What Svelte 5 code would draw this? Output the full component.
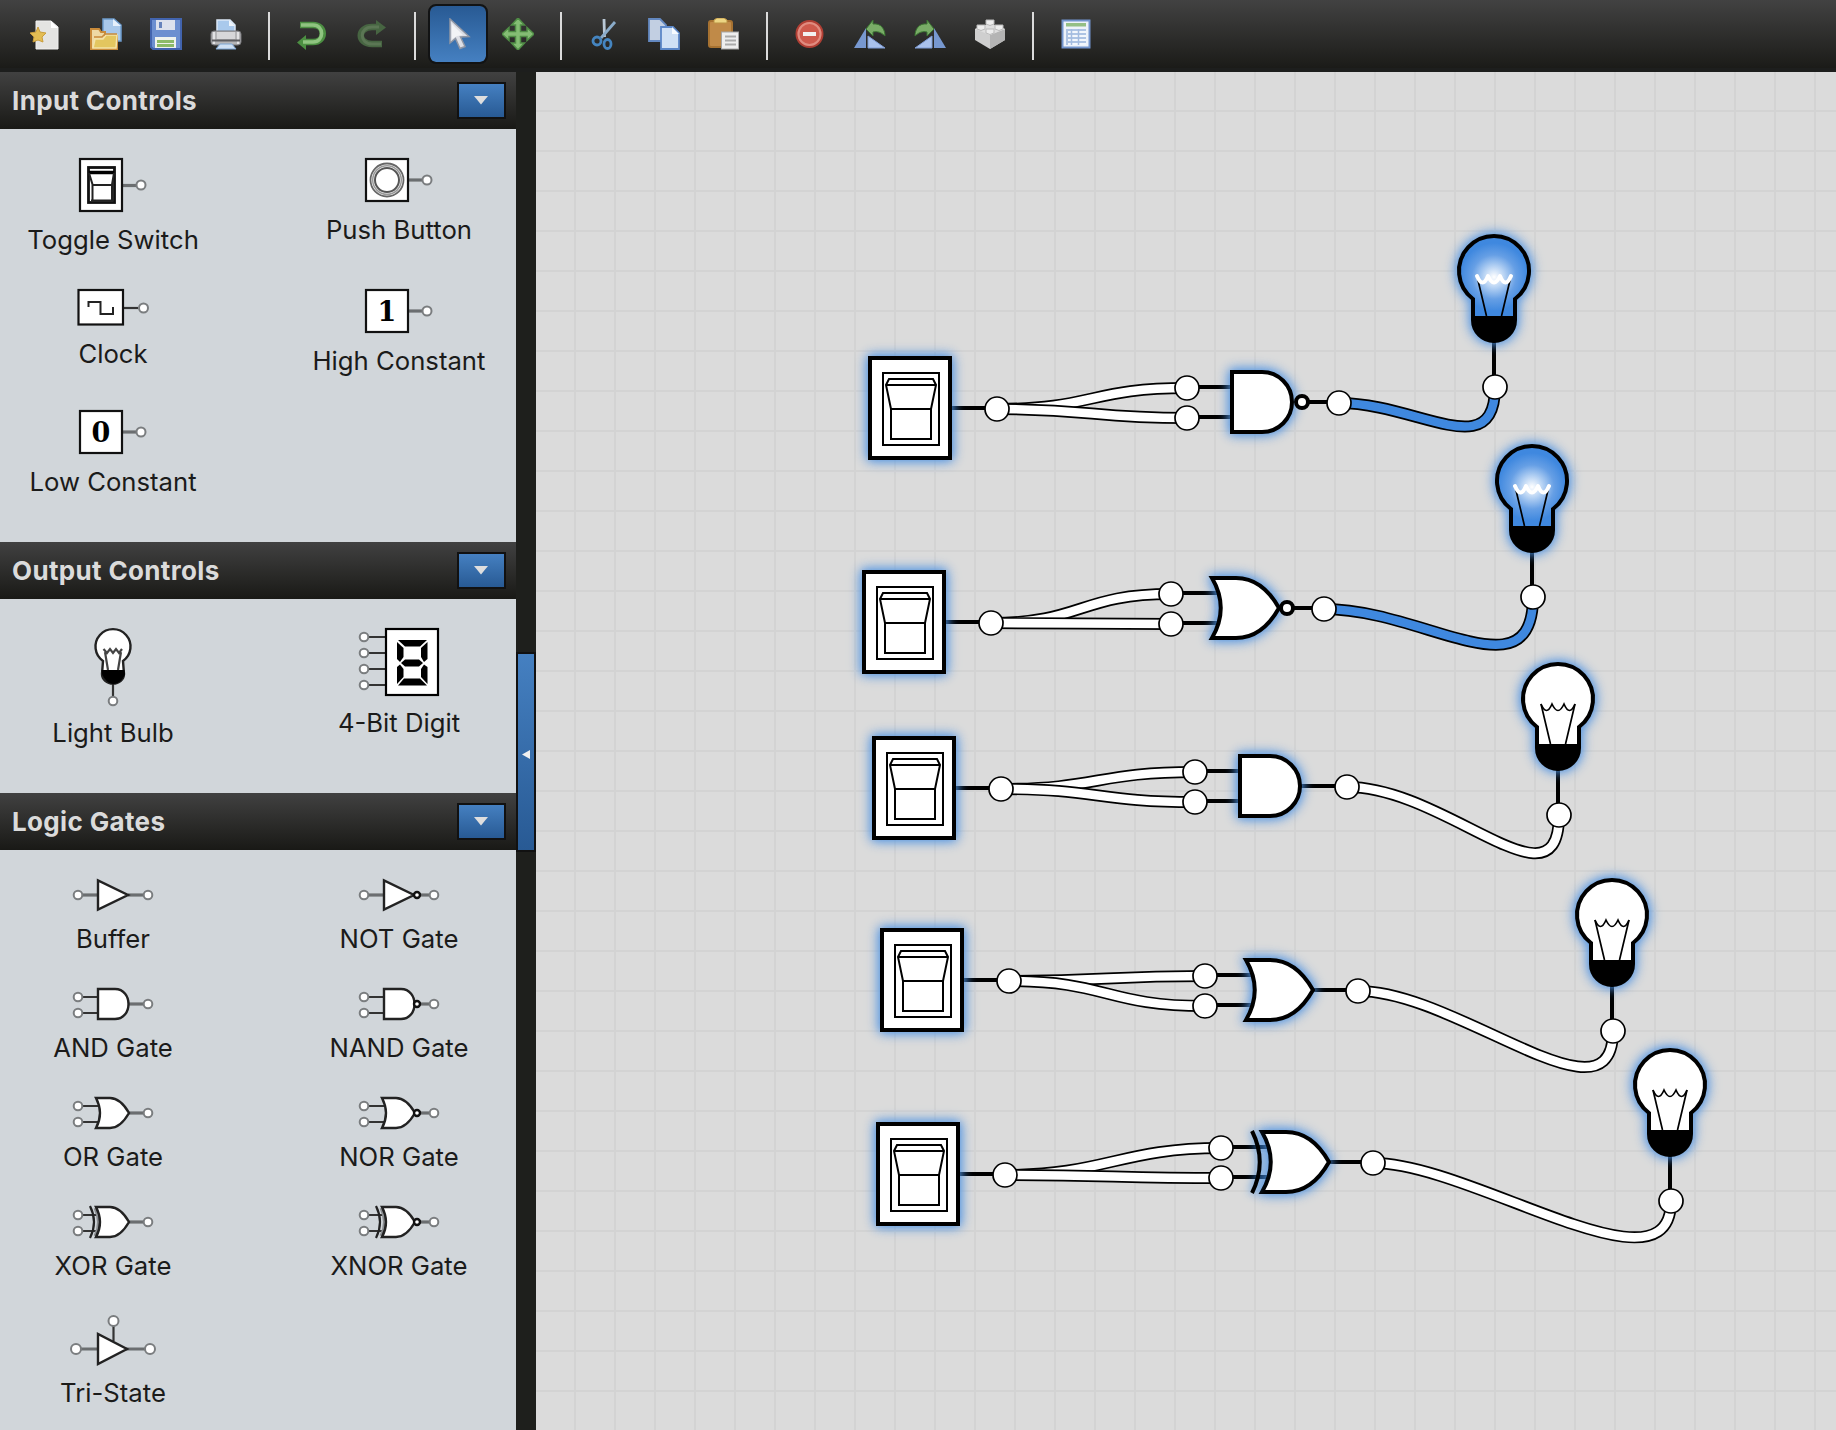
<script>
  const tools = [
    ['new', 'open', 'save', 'print'],
    ['undo', 'redo'],
    ['select', 'move'],
    ['cut', 'copy', 'paste'],
    ['delete', 'rotateLeft', 'rotateRight', 'brick'],
    ['table'],
  ];

  const sections = [
    {
      title: 'Input Controls', key: 'input',
      items: [
        { name: 'Toggle Switch', icon: 'toggle', w: 68, h: 54 },
        { name: 'Push Button', icon: 'push', w: 68, h: 44 },
        { name: 'Clock', icon: 'clock', w: 71, h: 37 },
        { name: 'High Constant', icon: 'const', digit: '1', w: 68, h: 44 },
        { name: 'Low Constant', icon: 'const', digit: '0', w: 68, h: 44 },
      ],
    },
    {
      title: 'Output Controls', key: 'output',
      items: [
        { name: 'Light Bulb', icon: 'bulb', w: 38, h: 78 },
        { name: '4-Bit Digit', icon: 'digit', w: 80, h: 68 },
      ],
    },
    {
      title: 'Logic Gates', key: 'gates',
      items: [
        { name: 'Buffer', icon: 'gate', shape: 'buf', w: 80, h: 32 },
        { name: 'NOT Gate', icon: 'gate', shape: 'buf', inv: true, w: 80, h: 32 },
        { name: 'AND Gate', icon: 'gate', shape: 'and', w: 80, h: 32 },
        { name: 'NAND Gate', icon: 'gate', shape: 'and', inv: true, w: 80, h: 32 },
        { name: 'OR Gate', icon: 'gate', shape: 'or', w: 80, h: 32 },
        { name: 'NOR Gate', icon: 'gate', shape: 'or', inv: true, w: 80, h: 32 },
        { name: 'XOR Gate', icon: 'gate', shape: 'xor', w: 80, h: 32 },
        { name: 'XNOR Gate', icon: 'gate', shape: 'xor', inv: true, w: 80, h: 32 },
        { name: 'Tri-State', icon: 'tri', w: 86, h: 50 },
      ],
    },
  ];

  const iconBody = {
    buf: 'M25 1.5V30.5L55 16Z',
    and: 'M25 1H42C60 1 60 31 42 31H25Z',
    or: 'M23 1H37C46 1 52 9 56 16C52 23 46 31 37 31H23Q31 16 23 1Z',
    xor: 'M23 1H37C46 1 52 9 56 16C52 23 46 31 37 31H23Q31 16 23 1Z',
  };

  const gateBody = {
    and: 'M0 0H30A30 30 0 0 1 30 60H0Z',
    or: 'M-4 0H20C40 0 54 14 63 30C54 46 40 60 20 60H-4Q13.5 30 -4 0Z',
  };

  // Each row is switch -> gate -> bulb; coordinates are the part origins on the canvas.
  const rows = [
    { s: [870, 358], g: [1232, 372], b: [1494, 271], shape: 'and', inv: true, bubble: 70, out: 107 },
    { s: [864, 572], g: [1216, 578], b: [1532, 481], shape: 'or', inv: true, bubble: 71, out: 108 },
    { s: [874, 738], g: [1240, 756], b: [1558, 699], shape: 'and', inv: false, out: 107 },
    { s: [882, 930], g: [1250, 960], b: [1612, 915], shape: 'or', inv: false, out: 108 },
    { s: [878, 1124], g: [1266, 1132], b: [1670, 1085], shape: 'or', xor: true, inv: false, out: 107 },
  ];

  function wire(x1, y1, x2, y2, down) {
    const k = Math.min(100, Math.hypot(x2 - x1, y2 - y1) / 2);
    const c2 = down ? `${x2} ${y2 + k}` : `${x2 - k} ${y2}`;
    return `M${x1} ${y1}C${x1 + k} ${y1} ${c2} ${x2} ${y2}`;
  }

  const wires = rows.flatMap(({ s, g, b, out, inv }) => [
    { d: wire(s[0] + 127, s[1] + 51, g[0] - 45, g[1] + 16, false), on: false },
    { d: wire(s[0] + 127, s[1] + 51, g[0] - 45, g[1] + 46, false), on: false },
    { d: wire(g[0] + out, g[1] + 31, b[0] + 1, b[1] + 116, true), on: inv },
  ]);

  const ports = rows.flatMap(({ s, g, b, out }) => [
    [s[0] + 127, s[1] + 51],
    [g[0] - 45, g[1] + 16],
    [g[0] - 45, g[1] + 46],
    [g[0] + out, g[1] + 31],
    [b[0] + 1, b[1] + 116],
  ]);

  const segments = [
    'M39 12H68L61 18.500H46Z', 'M38 14L44.500 20V29L41 34L38 31Z', 'M68.500 14L62 20V29L65 34L68.500 31Z',
    'M42 35L46 31.500H60L64 35L60 38.500H46Z',
    'M38 39L41 36.500L44.500 41V49L38 56Z', 'M68.500 39L65 36.500L62 41V49L68.500 56Z', 'M45 50.500H61L68 57.500H39Z',
  ];
</script>

{#snippet toolIcon(name)}
  <svg class="tool-icon" viewBox="0 0 32 32" aria-hidden="true">
    {#if name === 'new'}
      <path d="M6 3H21L28 9V31H6Z" fill="#e4e4e2" stroke="#f0f0f0" />
      <path d="M21 3L28 10H21Z" fill="#fff" />
      <path d="M8 9L10 14L16 15L12 19L13 24L8 22L3 24L4 19L0 15L6 14Z" fill="#e3bd53" stroke="#c99d3c" />
    {:else if name === 'open'}
      <path d="M13 1H24L31 7V23H13Z" fill="#a9c8ea" stroke="#6e9ccd" stroke-width="1.5" />
      <path d="M23 1V8H31Z" fill="#e6f0fb" />
      <path d="M1 31V11H9L11 14H15V18H27V31Z" fill="#eed9a4" stroke="#c98b3a" stroke-width="2" />
      <path d="M3 30L5 21H13L16 17H27L26 30Z" fill="#e3c65f" stroke="#f3e3a8" stroke-width="1.5" />
      <path d="M4 19H12L15 16H27" fill="none" stroke="#c98b3a" stroke-width="1.5" />
    {:else if name === 'save'}
      <path d="M1 1H31V31H3L1 29Z" fill="#6c8fd0" stroke="#4264ae" stroke-width="2" />
      <rect x="6" y="2" width="19" height="10" fill="#dce1ed" />
      <rect x="9" y="4" width="3" height="6" fill="#6683bc" />
      <rect x="5" y="19" width="21" height="11" fill="#eef2ee" />
      <path d="M7 23.5H24M7 27.5H24" stroke="#8cba68" stroke-width="3" />
    {:else if name === 'print'}
      <path d="M7 15V2H20L25 7V15Z" fill="#a9c9ec" stroke="#dbe8f6" stroke-width="1.5" />
      <path d="M19 2V8H25Z" fill="#eef5fc" />
      <rect x="1" y="13" width="30" height="14" rx="3" fill="#b5b5b7" stroke="#77777b" />
      <rect x="7" y="14" width="18" height="7" fill="#d7d7d9" />
      <path d="M4 14V26M28 14V26" stroke="#e2e2e4" stroke-width="2" />
      <path d="M2 22.500H30" stroke="#5d5d60" stroke-width="2" />
      <path d="M6 31L10 26H22L26 31Z" fill="#cfe0f3" stroke="#7fa6d3" />
    {:else if name === 'undo'}
      <path d="M4 7H17C30 7 30 24 17 24H10" fill="none" stroke="#4c8f42" stroke-width="6.5" />
      <path d="M10 17V32L1 24.5Z" fill="#4c8f42" />
      <path d="M5 7H17C28.500 7 28.500 24 17 24H7" fill="none" stroke="#8fc480" stroke-width="3.500" />
    {:else if name === 'redo'}
      <path d="M26 26H16C1 26 1 9 16 9H20" fill="none" stroke="#476542" stroke-width="6.500" />
      <path d="M20 2V17L30 9.500Z" fill="#476542" />
      <path d="M25 26H16C3 26 3 9 16 9H23" fill="none" stroke="#5b7654" stroke-width="3" />
    {:else if name === 'select'}
      <path d="M8 1V25L13.500 20.500L18 30.500L23 28.500L18.500 19L27 18.500Z" fill="#dddfe6" stroke="#8f96a4" stroke-width="1.500" />
      <path d="M10 6L21 17L15 18L10 21Z" fill="#f2f3f6" />
    {:else if name === 'move'}
      <path d="M16 0L22.500 7H18.500V13.500H25V9.500L32 16L25 22.500V18.500H18.500V25H22.500L16 32L9.500 25H13.500V18.500H7V22.500L0 16L7 9.500V13.500H13.500V7H9.500Z" fill="#84bd74" stroke="#4f8c45" stroke-width="1.500" />
    {:else if name === 'cut'}
      <path d="M16 1L16.500 19" stroke="#b9c8d6" stroke-width="2.800" />
      <path d="M27 4L13 20" stroke="#8aabc9" stroke-width="2.800" />
      <circle cx="9" cy="23" r="4" fill="none" stroke="#4585c0" stroke-width="2.800" />
      <ellipse cx="19.500" cy="26" rx="3.500" ry="4.500" fill="none" stroke="#4585c0" stroke-width="2.800" />
    {:else if name === 'copy'}
      <path d="M1 1H12L18 7V23H1Z" fill="#c2cfe2" stroke="#6388c0" stroke-width="1.800" />
      <path d="M13 9H25L31 15V31H13Z" fill="#cfe0f5" stroke="#5b87c8" stroke-width="1.800" />
      <path d="M24 9V16H31Z" fill="#f7fbff" />
    {:else if name === 'paste'}
      <rect x="1" y="3" width="23" height="26" rx="2" fill="#c08a48" stroke="#a77231" stroke-width="2" />
      <path d="M6 5V2L9 0H16L19 2V5Z" fill="#ecd583" stroke="#bb9344" />
      <rect x="13.500" y="14" width="17" height="17" fill="#eeeeee" stroke="#a5a5a5" />
      <path d="M17 18.500H28M17 22.500H28M17 26.500H28" stroke="#aaa" stroke-width="1.800" />
    {:else if name === 'delete'}
      <circle cx="15.500" cy="16" r="13" fill="#cf5a4d" stroke="#b03f34" stroke-width="2" />
      <circle cx="15.500" cy="16" r="11" fill="none" stroke="#e08c80" stroke-width="2" />
      <rect x="9" y="14" width="13" height="4" fill="#f3f1f1" />
    {:else if name === 'rotateLeft' || name === 'rotateRight'}
      <g class:flipped={name === 'rotateRight'}>
        <path d="M12 10V30H0Z" fill="#7798d0" />
        <path d="M14 18V30H31Z" fill="#a9c1eb" stroke="#7d9bd4" />
        <path d="M12 11L19 2V6C27 5 31 11 31 18C27 14 23 13 19 14V18Z" fill="#79ad67" stroke="#3b7532" />
      </g>
    {:else if name === 'brick'}
      <path d="M1 11L16 5L31 11V22L16 31L1 22Z" fill="#cfcfcf" />
      <path d="M16 17L31 11V22L16 31Z" fill="#b4b4b4" />
      <path d="M1 11L16 17L31 11L16 5Z" fill="#dedede" />
      <g fill="#ededed" stroke="#b9b9b9">
        <path d="M12 2H20V6Q16 9 12 6Z" /><path d="M3 7H11V11Q7 14 3 11Z" />
        <path d="M21 7H29V11Q25 14 21 11Z" /><path d="M12 11H20V15Q16 18 12 15Z" />
      </g>
    {:else if name === 'table'}
      <rect x="2.500" y="2.500" width="27" height="27" fill="#edf2fa" stroke="#7294cd" stroke-width="2" />
      <rect x="6" y="5" width="20" height="3.500" fill="#94bf85" />
      <rect x="6" y="11" width="20" height="16" fill="#adc3e3" />
      <path d="M8 14H26M8 18H26M8 22H26M8 26H26" stroke="#f2f6fc" stroke-width="2.200" />
      <path d="M11.500 11V27M18.500 11V27" stroke="#a3bbe0" stroke-width="1.500" />
    {/if}
  </svg>
{/snippet}

{#snippet partIcon(item)}
  <svg class="part-icon" width={item.w} height={item.h} viewBox="0 0 {item.w} {item.h}" aria-hidden="true">
    {#if item.icon === 'toggle'}
      <path class="lead" d="M44 27.500H58" />
      <rect class="frame" x="1" y="1" width="42" height="52" />
      <rect x="9.500" y="9.500" width="26" height="35" fill="#fff" stroke="#111" stroke-width="2.800" />
      <path d="M10 14.500H35" stroke="#000" stroke-width="3.500" />
      <path d="M10 15L13.500 26.500V43M35 15L33 26.500V43M13 27H34M12 42.500H35" stroke="#222" stroke-width="2" fill="none" />
      <circle class="pin" cx="62" cy="27" r="4.500" />
    {:else if item.icon === 'push'}
      <path class="lead" d="M44 22H58" />
      <rect class="frame" x="1" y="1" width="42" height="42" />
      <circle cx="22" cy="22" r="16.500" fill="#fff" stroke="#666" stroke-width="1.800" />
      <circle cx="22" cy="22" r="12" fill="#fff" stroke="#555" stroke-width="2" />
      <circle cx="22" cy="22" r="14.300" fill="none" stroke="#999" stroke-width="1.500" />
      <circle class="pin" cx="62" cy="22" r="4.500" />
    {:else if item.icon === 'clock'}
      <path class="lead dark" d="M45 19H60" />
      <rect class="frame" x="0.500" y="1" width="44.500" height="34.500" />
      <path d="M10.500 18V13H22.500V25H35V18" fill="none" stroke="#222" stroke-width="2" />
      <circle class="pin" cx="65.500" cy="19" r="4.500" />
    {:else if item.icon === 'const'}
      <path class="lead" d="M44 22H58" />
      <rect class="frame" x="1" y="1" width="42" height="42" />
      <text class="digit" x="22" y="31.500">{item.digit}</text>
      <circle class="pin" cx="62" cy="22" r="4.500" />
    {:else if item.icon === 'bulb'}
      <path class="lead dark" d="M19 54V68" />
      <path class="body" d="M9 33A17.500 17.500 0 1 1 29 33L30 46A11 9.500 0 0 1 8 46Z" />
      <path d="M7.500 42H30.500L31 46C29 52 24 56 19.500 56S10 52 8 46Z" fill="#000" />
      <path d="M9.500 21L13 25L16 21L19 25L22 21L25 25L28 21M11 24L14 42M27 24L24 42" fill="none" stroke="#444" stroke-width="2.200" />
      <circle class="pin" cx="19" cy="73" r="4.300" />
    {:else if item.icon === 'digit'}
      <path class="lead dark" d="M9 9H27M9 25H27M9 41H27M9 57H27" />
      <rect x="27" y="1" width="52" height="66" fill="#fff" stroke="#000" stroke-width="2.200" />
      {#each segments as d}<path {d} fill="#000" />{/each}
      {#each [9, 25, 41, 57] as y}<circle class="pin" cx="5" cy={y} r="4.300" />{/each}
    {:else if item.icon === 'tri'}
      <path class="lead" d="M10 34H28M56 34H76" />
      <path class="lead dark" d="M43.500 11V26" />
      <path class="body" d="M28 19V49L57 34Z" />
      <circle class="pin" cx="6" cy="34" r="5" /><circle class="pin" cx="80" cy="34" r="5" />
      <circle class="pin" cx="43.500" cy="6" r="5" />
    {:else}
      <path class="lead" d="M55 16H71" />
      {#if item.shape === 'buf'}
        <path class="lead" d="M9 16H25" />
      {:else}
        <path class="lead dark" d="M9 9H26M9 25H26" />
      {/if}
      {#if item.shape === 'xor'}
        <path d="M17 0Q25 16 17 32" fill="none" stroke="#222" stroke-width="2.200" />
        <path d="M22 2Q29 16 22 30" fill="none" stroke="#8a8d90" stroke-width="3" />
      {/if}
      <path class="body" d={iconBody[item.shape]} />
      {#if item.inv}<circle cx="58" cy="16" r="3" fill="#fff" stroke="#111" stroke-width="2.400" />{/if}
      {#if item.shape === 'buf'}
        <circle class="pin" cx="5" cy="16" r="4.300" />
      {:else}
        <circle class="pin" cx="5" cy="9" r="4.300" /><circle class="pin" cx="5" cy="25" r="4.300" />
      {/if}
      <circle class="pin" cx="75" cy="16" r="4.300" />
    {/if}
  </svg>
{/snippet}

<div class="app">
  <header class="toolbar">
    {#each tools as group, i}
      {#if i > 0}<span class="sep"></span>{/if}
      {#each group as name}
        <button class="tool" class:active={name === 'select'} aria-label={name}>{@render toolIcon(name)}</button>
      {/each}
    {/each}
  </header>

  <div class="main">
    <aside class="sidebar">
      {#each sections as section}
        <section class={section.key}>
          <h2>
            <span>{section.title}</span>
            <button class="drop" aria-label="Collapse"><svg width="14" height="9" viewBox="0 0 14 9"><path d="M0 0H14L7 8.500Z" fill="#dedede" /></svg></button>
          </h2>
          <div class="parts">
            {#each section.items as item}
              <div class="part">
                {@render partIcon(item)}
                <span class="label">{item.name}</span>
              </div>
            {/each}
          </div>
        </section>
      {/each}
    </aside>

    <div class="splitter">
      <button class="handle" aria-label="Hide sidebar"><svg width="8" height="9" viewBox="0 0 8 9"><path d="M8 0V9L0 4.500Z" fill="#f0f0f0" /></svg></button>
    </div>

    <main class="canvas">
      <svg width="1300" height="1358" viewBox="536 72 1300 1358">
        <defs>
          <radialGradient id="glow" gradientUnits="userSpaceOnUse" cx="0" cy="6" r="34">
            <stop offset="0" stop-color="#fff" />
            <stop offset="0.300" stop-color="#b9d4f4" />
            <stop offset="0.650" stop-color="#669fe5" />
            <stop offset="1" stop-color="#3f88df" />
          </radialGradient>
        </defs>

        {#each rows as row}
          <g transform="translate({row.s[0]} {row.s[1]})">
            <path class="stub" d="M80 50H120" />
            <rect class="solid" width="80" height="100" />
            <path class="fine" d="M13 15H69V87H13Z" />
            <path class="fine" d="M16 27L19 21H63L66 27L61 51H21ZM16 27H66M21 51V81H61V51" />
          </g>
          <g transform="translate({row.g[0]} {row.g[1]})">
            <path class="stub" d="M-40 15H3M-40 45H3M{row.inv ? 74 : 60} 30H100" />
            <path class="solid" d={gateBody[row.shape]} />
            {#if row.xor}<path class="arc" d="M-14 -1Q1.500 30 -14 61" />{/if}
            {#if row.inv}<circle class="bubble" cx={row.bubble} cy="30" r="6" />{/if}
          </g>
          <g transform="translate({row.b[0]} {row.b[1]})">
            <path class="stub" d="M0 70V110" />
            <path class="solid" class:lit={row.inv} d="M-21 28A35 35 0 1 1 21 28V49A21 21 0 0 1 -21 49Z" />
            <path d="M-21 45H21V49A21 21 0 0 1 -21 49Z" />
            <path class="leg" d="M-17 5L-7.500 45M17 5L7.500 45" />
            <path class="filament" class:hot={row.inv} d="M-17 5Q-11.500 18 -6 5Q0 18 6 5Q11.500 18 17 5" />
          </g>
        {/each}

        {#each wires as w}
          <path class="wire-edge" d={w.d} />
          <path class="wire" class:on={w.on} d={w.d} />
        {/each}
        {#each ports as [x, y]}
          <circle class="port" cx={x} cy={y} r="12" />
        {/each}
      </svg>
    </main>
  </div>
</div>

<style>
  :global(body) { margin: 0; background: #1e1f1c; }
  .app { width: 1836px; height: 1430px; overflow: hidden; display: flex; flex-direction: column; font-family: Inter, "Liberation Sans", sans-serif; color: #1b1b1a; }
  button { padding: 0; margin: 0; box-sizing: border-box; display: flex; align-items: center; justify-content: center; }

  .toolbar { box-sizing: border-box; height: 72px; flex: none; display: flex; align-items: flex-start; padding: 4px 16px 0; border-bottom: 4px solid #1d1e1d; background: linear-gradient(#424242, #1b1b18) padding-box; }
  .tool { width: 60px; height: 60px; border: 2px solid transparent; border-radius: 8px; background: none; }
  .tool.active { border-color: #121314; background: linear-gradient(#285a94, #4580c1) padding-box; }
  .tool-icon { width: 32px; height: 32px; display: block; }
  .flipped { transform: translateX(32px) scaleX(-1); }
  .sep { width: 2px; height: 48px; margin: 8px 12px 0; background: #dbdbdb; }

  .main { flex: 1; min-height: 0; display: flex; }
  .sidebar { width: 516px; flex: none; background: #d1d6da; overflow: hidden; }
  h2 { margin: 0; box-sizing: border-box; height: 57px; padding: 0 10px 0 12px; display: flex; align-items: center; justify-content: space-between; font-size: 26px; letter-spacing: 0.350px; font-weight: 700; color: #dbdbdb; background: linear-gradient(#414141, #191916); }
  .drop { width: 49px; height: 37px; padding: 0 2px 1px 0; border: 2px solid #111; background: linear-gradient(#4580c1, #285a94); }
  .parts { display: grid; grid-template-columns: 226px 234px; column-gap: 56px; padding: 29px 0 10px; }
  .input .parts { padding-bottom: 11px; }
  .part { display: flex; flex-direction: column; align-items: center; }
  .part-icon { display: block; flex: none; overflow: visible; }
  .label { box-sizing: border-box; height: 77px; padding-top: 12px; font-size: 25.700px; line-height: 32px; white-space: nowrap; }
  .output .label { padding-top: 11px; }

  .lead { fill: none; stroke: #6b6e70; stroke-width: 3.200; }
  .lead.dark { stroke: #333; stroke-width: 2.200; }
  .frame { fill: #fff; stroke: #111; stroke-width: 2.200; }
  .body { fill: #fff; stroke: #222; stroke-width: 2.400; }
  .pin { fill: #fff; stroke: #7a7d7f; stroke-width: 2; }
  .digit { font: 700 27px "DejaVu Serif", serif; text-anchor: middle; fill: #000; }

  .splitter { width: 20px; flex: none; background: #1e1f1c; padding-top: 580px; box-sizing: border-box; }
  .handle { width: 20px; height: 200px; padding: 5px 1px 0 0; border: 2px solid #111; background: linear-gradient(#4580c1, #285a94); }

  .canvas { flex: 1; min-width: 0; background-color: #dbdbdb; background-image: linear-gradient(to right, transparent 38px, #d3d3d3 38px), linear-gradient(transparent 38px, #d3d3d3 38px); background-size: 40px 40px; }
  .canvas svg { display: block; }
  .stub { fill: none; stroke: #000; stroke-width: 4; }
  .solid { fill: #fff; stroke: #000; stroke-width: 4; filter: drop-shadow(0 0 6px #4a90e2) drop-shadow(0 0 4px rgba(74, 144, 226, 0.450)); }
  .lit { fill: url(#glow); }
  .fine { fill: none; stroke: #000; stroke-width: 2; }
  .arc { fill: none; stroke: #000; stroke-width: 4; filter: drop-shadow(0 0 5px #2f86e6); }
  .bubble { fill: #fff; stroke: #000; stroke-width: 4; }
  .leg, .filament { fill: none; stroke: #000; stroke-width: 1.700; }
  .filament.hot { stroke: #fff; stroke-width: 4; stroke-linecap: round; stroke-linejoin: round; }
  .wire-edge { fill: none; stroke: #000; stroke-width: 12; }
  .wire { fill: none; stroke: #fff; stroke-width: 8.600; }
  .wire.on { stroke: #3f88df; }
  .port { fill: #fff; stroke: #000; stroke-width: 1.700; }
</style>
